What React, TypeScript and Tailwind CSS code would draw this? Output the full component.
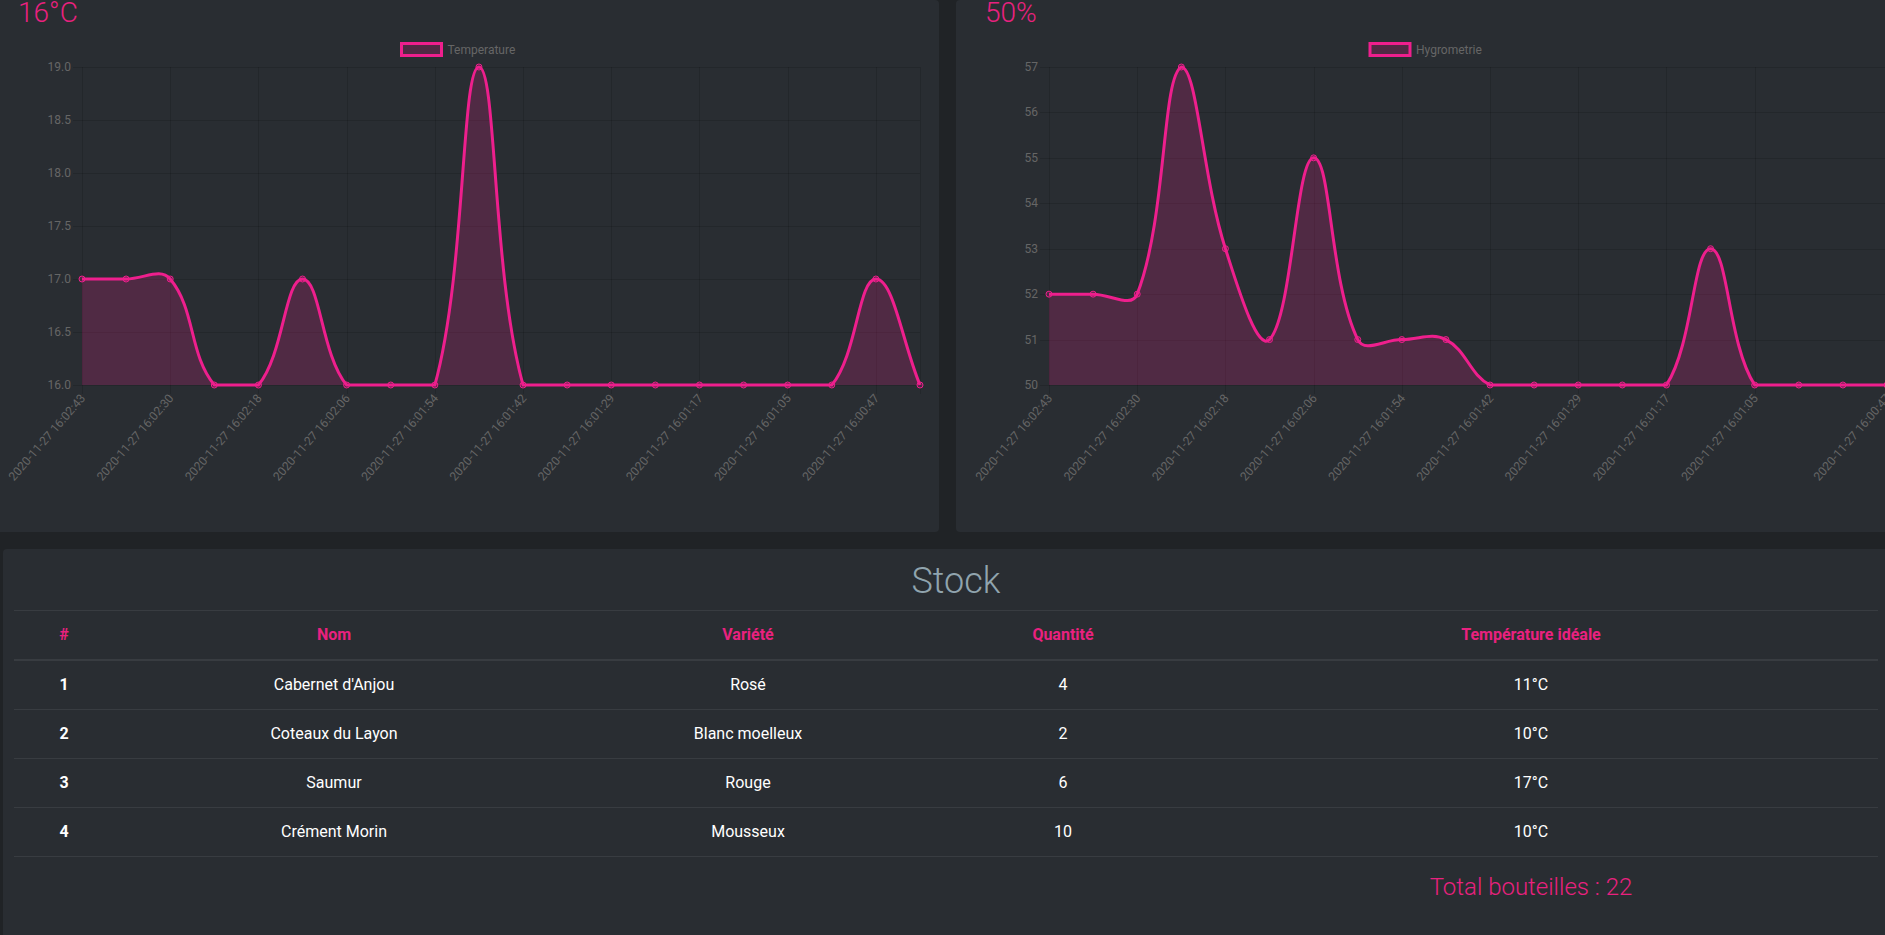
import React from "react";

type Pt = { x: number; y: number };

const PINK = "#ee1f8d";
const PINK_FILL = "rgba(238,31,141,0.2)";
const GRID = "rgba(0,0,0,0.13)";

const LABELS = [
  "2020-11-27 16:02:43",
  "2020-11-27 16:02:37",
  "2020-11-27 16:02:30",
  "2020-11-27 16:02:24",
  "2020-11-27 16:02:18",
  "2020-11-27 16:02:12",
  "2020-11-27 16:02:06",
  "2020-11-27 16:02:00",
  "2020-11-27 16:01:54",
  "2020-11-27 16:01:48",
  "2020-11-27 16:01:42",
  "2020-11-27 16:01:35",
  "2020-11-27 16:01:29",
  "2020-11-27 16:01:23",
  "2020-11-27 16:01:17",
  "2020-11-27 16:01:11",
  "2020-11-27 16:01:05",
  "2020-11-27 16:00:56",
  "2020-11-27 16:00:47",
  "2020-11-27 16:00:47",
];

const TEMP = [17, 17, 17, 16, 16, 17, 16, 16, 16, 19, 16, 16, 16, 16, 16, 16, 16, 16, 17, 16];
const HYGRO = [52, 52, 52, 57, 53, 51, 55, 51, 51, 51, 50, 50, 50, 50, 50, 53, 50, 50, 50, 50];

const wines = [
  { id: 1, nom: "Cabernet d'Anjou", variete: "Rosé", qte: 4, temp: "11°C" },
  { id: 2, nom: "Coteaux du Layon", variete: "Blanc moelleux", qte: 2, temp: "10°C" },
  { id: 3, nom: "Saumur", variete: "Rouge", qte: 6, temp: "17°C" },
  { id: 4, nom: "Crément Morin", variete: "Mousseux", qte: 10, temp: "10°C" },
];

// same spline as chart.js v2 (tension 0.4, control points capped to the area)
function curvePath(pts: Pt[], area: { l: number; r: number; t: number; b: number }) {
  const cap = (p: Pt) => ({
    x: Math.min(Math.max(p.x, area.l), area.r),
    y: Math.min(Math.max(p.y, area.t), area.b),
  });
  const cps = pts.map((cur, i) => {
    const prev = pts[i - 1] || cur;
    const next = pts[i + 1] || cur;
    const d01 = Math.hypot(cur.x - prev.x, cur.y - prev.y);
    const d12 = Math.hypot(next.x - cur.x, next.y - cur.y);
    let s01 = d01 / (d01 + d12);
    let s12 = d12 / (d01 + d12);
    if (isNaN(s01)) s01 = 0;
    if (isNaN(s12)) s12 = 0;
    const fa = 0.4 * s01;
    const fb = 0.4 * s12;
    return {
      prev: cap({ x: cur.x - fa * (next.x - prev.x), y: cur.y - fa * (next.y - prev.y) }),
      next: cap({ x: cur.x + fb * (next.x - prev.x), y: cur.y + fb * (next.y - prev.y) }),
    };
  });
  let d = `M${pts[0].x},${pts[0].y}`;
  for (let i = 1; i < pts.length; i++) {
    const a = cps[i - 1].next;
    const b = cps[i].prev;
    d += ` C${a.x},${a.y} ${b.x},${b.y} ${pts[i].x},${pts[i].y}`;
  }
  return d;
}

type ChartProps = {
  data: number[];
  min: number;
  max: number;
  ticks: number[];
  fmt: (v: number) => string;
  legend: string;
  legendX: number;
  labelIdx: number[];
};

const LineChart = ({ data, min, max, ticks, fmt, legend, legendX, labelIdx }: ChartProps) => {
  const left = 93;
  const right = 931;
  const top = 37;
  const bottom = 355;
  const step = (right - left) / (data.length - 1);
  const yOf = (v: number) => bottom - ((v - min) / (max - min)) * (bottom - top);
  const pts = data.map((v, i) => ({ x: left + i * step, y: yOf(v) }));
  const line = curvePath(pts, { l: left, r: right, t: top, b: bottom });
  const area = `${line} L${right},${bottom} L${left},${bottom} Z`;

  return (
    <svg width={950} height={502} className="block" fontFamily="Roboto, sans-serif" fontSize={12}>
      {/* legend */}
      <rect x={legendX} y={13.5} width={40} height={12} fill={PINK_FILL} stroke={PINK} strokeWidth={3} />
      <text x={legendX + 46} y={20} fill="#666" dominantBaseline="central">
        {legend}
      </text>

      {/* grid */}
      {ticks.map((t) => {
        const y = Math.round(yOf(t)) + 0.5;
        return <line key={t} x1={left - 9} x2={right} y1={y} y2={y} stroke={GRID} />;
      })}
      {[...labelIdx, data.length - 1].map((i) => {
        const x = Math.round(left + i * step) + 0.5;
        return <line key={"v" + i} x1={x} x2={x} y1={top} y2={bottom + 9} stroke={GRID} />;
      })}

      {/* y labels */}
      {ticks.map((t) => (
        <text key={"y" + t} x={82} y={yOf(t)} textAnchor="end" dominantBaseline="central" fill="#666">
          {fmt(t)}
        </text>
      ))}

      {/* x labels */}
      {labelIdx.map((i) => (
        <text
          key={"x" + i}
          transform={`translate(${left + i * step + 1},${bottom + 11}) rotate(-49)`}
          textAnchor="end"
          dominantBaseline="central"
          fill="#666"
        >
          {LABELS[i]}
        </text>
      ))}

      <path d={area} fill={PINK_FILL} />
      <path d={line} fill="none" stroke={PINK} strokeWidth={3} />
      {pts.map((p, i) => (
        <circle key={"p" + i} cx={p.x} cy={p.y} r={3} fill={PINK_FILL} stroke={PINK} strokeWidth={1} />
      ))}
    </svg>
  );
};

const Panel = ({ title, children }: { title: string; children: React.ReactNode }) => (
  <div className="flex h-[532px] w-[950px] shrink-0 flex-col rounded-[4px] bg-[#292d32]">
    <div className="-mt-[4px] pl-[29px] text-[28px] font-light leading-[34px] text-[#e9217f]">{title}</div>
    {children}
  </div>
);

export default function App() {
  return (
    <div className="h-[935px] w-[1885px] overflow-hidden bg-[#202326] font-[Roboto,sans-serif]">
      <div className="-ml-[11px] flex gap-[17px]">
        <Panel title="16°C">
          <LineChart
            data={TEMP}
            min={16}
            max={19}
            ticks={[19, 18.5, 18, 17.5, 17, 16.5, 16]}
            fmt={(v) => v.toFixed(1)}
            legend="Temperature"
            legendX={412.5}
            labelIdx={[0, 2, 4, 6, 8, 10, 12, 14, 16, 18]}
          />
        </Panel>
        <Panel title="50%">
          <LineChart
            data={HYGRO}
            min={50}
            max={57}
            ticks={[57, 56, 55, 54, 53, 52, 51, 50]}
            fmt={(v) => String(v)}
            legend="Hygrometrie"
            legendX={414}
            labelIdx={[0, 2, 4, 6, 8, 10, 12, 14, 16, 19]}
          />
        </Panel>
      </div>

      <div className="ml-[3px] mt-[17px] w-[1906px] rounded-[4px] bg-[#292d32] px-[11px] pb-[40px] pt-[11px]">
        <h2 className="mb-[7px] text-center text-[36px] font-light leading-[43px] text-[#90a4ae]">Stock</h2>
        <table className="w-[1864px] table-fixed text-center text-[16px] leading-6 text-white">
          <thead>
            <tr>
              <th className="w-[100px] border-t border-b-2 border-[#383c41] p-3 font-bold text-[#e9217f]">#</th>
              <th className="w-[440px] border-t border-b-2 border-[#383c41] p-3 font-bold text-[#e9217f]">Nom</th>
              <th className="w-[388px] border-t border-b-2 border-[#383c41] p-3 font-bold text-[#e9217f]">Variété</th>
              <th className="w-[242px] border-t border-b-2 border-[#383c41] p-3 font-bold text-[#e9217f]">Quantité</th>
              <th className="border-t border-b-2 border-[#383c41] p-3 font-bold text-[#e9217f]">Température idéale</th>
            </tr>
          </thead>
          <tbody>
            {wines.map((w) => (
              <tr key={w.id}>
                <th className="border-t border-[#383c41] p-3 font-bold">{w.id}</th>
                <td className="border-t border-[#383c41] p-3">{w.nom}</td>
                <td className="border-t border-[#383c41] p-3">{w.variete}</td>
                <td className="border-t border-[#383c41] p-3">{w.qte}</td>
                <td className="border-t border-[#383c41] p-3">{w.temp}</td>
              </tr>
            ))}
            <tr>
              <td colSpan={4} className="border-t border-[#383c41] p-3"></td>
              <td className="border-t border-[#383c41] p-3 text-[24px] font-light leading-9 text-[#e9217f]">
                Total bouteilles : 22
              </td>
            </tr>
          </tbody>
        </table>
      </div>
    </div>
  );
}
